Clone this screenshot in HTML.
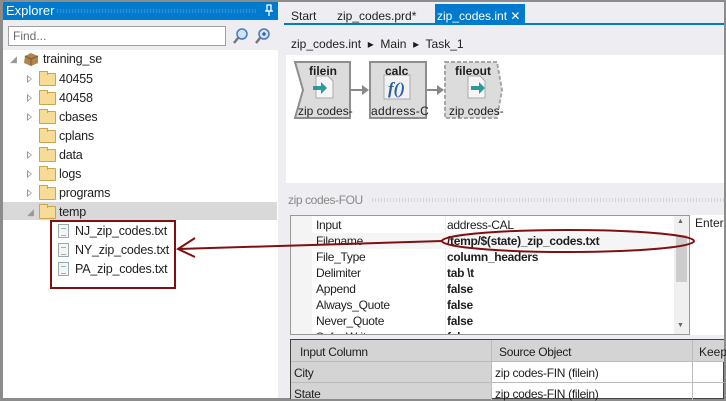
<!DOCTYPE html>
<html><head><style>
*{margin:0;padding:0;box-sizing:border-box}
body{width:726px;height:400px;overflow:hidden;background:#8c8c8c;font-family:"Liberation Sans",sans-serif;font-size:12px;color:#1e1e1e;position:relative}
.a{position:absolute}
.t{position:absolute;white-space:nowrap}
.tr{position:absolute;white-space:nowrap;font-size:12.5px;letter-spacing:-0.2px}
.fold{position:absolute;width:17px;height:13px;background:#f6dc97;border:1px solid #c9a550;border-radius:1px}
.fold:before{content:"";position:absolute;left:-1px;top:-3px;width:7px;height:3px;background:#f6dc97;border:1px solid #c9a550;border-bottom:none}
.tri{position:absolute;width:0;height:0;border-left:5px solid #999;border-top:4px solid transparent;border-bottom:4px solid transparent}
.tri:after{content:"";position:absolute;left:-4px;top:-2px;border-left:3px solid #fff;border-top:2px solid transparent;border-bottom:2px solid transparent}
.doc{position:absolute;width:11px;height:14px;background:#f4f6f6;border:1px solid #9aa}
.doc:before{content:"";position:absolute;left:2px;top:3px;width:5px;height:6px;border-top:1px solid #aab;border-bottom:1px solid #aab}
.row{position:absolute;left:312px;width:362px;height:16px;font-size:12px;letter-spacing:-0.3px}
.row span{position:absolute;top:1px}
</style></head><body>
<div class="a" style="left:3px;top:2px;width:275px;height:396px;background:#fff"></div>
<div class="a" style="left:3px;top:2px;width:275px;height:18px;background:#007acc"></div>
<div class="t" style="left:6px;top:3px;color:#fff;font-size:13px">Explorer</div>
<div class="a" style="left:56px;top:9px;width:200px;height:4px;background-image:radial-gradient(#5aa7e0 0.7px,transparent 0.9px);background-size:3px 2px"></div>
<svg class="a" style="left:264px;top:4px" width="10" height="13"><rect x="3" y="1" width="4" height="6" fill="none" stroke="#fff" stroke-width="1.3"/><path d="M1 7h8M5 7v5" stroke="#fff" stroke-width="1.3"/></svg>
<div class="a" style="left:3px;top:20px;width:275px;height:30px;background:#eeeef2"></div>
<div class="a" style="left:8px;top:26px;width:218px;height:20px;background:#fff;border:1px solid #a0a0a0"></div>
<div class="t" style="left:13px;top:29px;color:#6d6d6d">Find...</div>
<svg class="a" style="left:232px;top:27px" width="40" height="18"><circle cx="10" cy="7" r="5" fill="#cfe3f8" stroke="#4a78b8" stroke-width="1.5"/><line x1="6" y1="11" x2="2" y2="16" stroke="#777" stroke-width="2.5"/><circle cx="32" cy="7" r="5" fill="#cfe3f8" stroke="#4a78b8" stroke-width="1.5"/><line x1="28" y1="11" x2="24" y2="16" stroke="#777" stroke-width="2.5"/><path d="M30 7h4M32 5v4" stroke="#24558e" stroke-width="1.3"/></svg>
<div class="a" style="left:3px;top:202px;width:274px;height:18px;background:#d9d9d9"></div>
<div class="t" style="left:10px;top:54px;color:#999;font-size:9px">◢</div>
<svg class="a" style="left:23px;top:51px" width="17" height="15"><path d="M2 5l6-3 7 3v7l-7 3-7-3z" fill="#b08550"/><path d="M2 5l6 3 7-3M8 8v7" stroke="#7a5a30" fill="none"/></svg>
<div class="tr" style="left:43px;top:52px">training_se</div>
<div class="tri" style="left:27px;top:75px"></div><div class="fold" style="left:39px;top:73px"></div><div class="tr" style="left:59px;top:72px">40455</div>
<div class="tri" style="left:27px;top:94px"></div><div class="fold" style="left:39px;top:92px"></div><div class="tr" style="left:59px;top:91px">40458</div>
<div class="tri" style="left:27px;top:113px"></div><div class="fold" style="left:39px;top:111px"></div><div class="tr" style="left:59px;top:110px">cbases</div>
<div class="fold" style="left:39px;top:130px"></div><div class="tr" style="left:59px;top:129px">cplans</div>
<div class="tri" style="left:27px;top:151px"></div><div class="fold" style="left:39px;top:149px"></div><div class="tr" style="left:59px;top:148px">data</div>
<div class="tri" style="left:27px;top:170px"></div><div class="fold" style="left:39px;top:168px"></div><div class="tr" style="left:59px;top:167px">logs</div>
<div class="tri" style="left:27px;top:189px"></div><div class="fold" style="left:39px;top:187px"></div><div class="tr" style="left:59px;top:186px">programs</div>
<div class="t" style="left:27px;top:207px;color:#999;font-size:9px">◢</div><div class="fold" style="left:39px;top:206px"></div><div class="tr" style="left:59px;top:205px">temp</div>
<div class="doc" style="left:58px;top:224px"></div><div class="tr" style="left:75px;top:224px">NJ_zip_codes.txt</div>
<div class="doc" style="left:58px;top:243px"></div><div class="tr" style="left:75px;top:243px">NY_zip_codes.txt</div>
<div class="doc" style="left:58px;top:262px"></div><div class="tr" style="left:75px;top:262px">PA_zip_codes.txt</div>
<div class="a" style="left:50px;top:220px;width:126px;height:69px;border:2px solid #7f1010"></div>
<div class="a" style="left:278px;top:2px;width:5px;height:396px;background:#eeeef2"></div>
<div class="a" style="left:283px;top:2px;width:441px;height:396px;background:#eeeef2"></div>
<div class="t" style="left:291px;top:9px;font-size:12px">Start</div>
<div class="t" style="left:337px;top:9px;font-size:12px">zip_codes.prd*</div>
<div class="a" style="left:435px;top:4px;width:90px;height:21px;background:#007acc"></div>
<div class="t" style="left:437px;top:9px;font-size:12px;color:#fff">zip_codes.int ✕</div>
<div class="a" style="left:284px;top:23px;width:440px;height:2px;background:#007acc"></div>
<div class="t" style="left:291px;top:37px;font-size:12px">zip_codes.int &nbsp;▸&nbsp; Main &nbsp;▸&nbsp; Task_1</div>
<div class="a" style="left:286px;top:55px;width:438px;height:128px;background:#fff"></div>
<svg class="a" style="left:293px;top:60px" width="220" height="62">
<path d="M2 2h55v56h-55l8-28z" fill="#dcdcdc" stroke="#8e8e8e" stroke-width="2"/>
<rect x="77" y="2" width="56" height="56" fill="#dcdcdc" stroke="#8e8e8e" stroke-width="2"/>
<path d="M152 2h52l5 28-5 28h-52z" fill="#dcdcdc" stroke="#a6a6a6" stroke-width="2" stroke-dasharray="4 2"/>
<path d="M58 30h13" stroke="#888" stroke-width="2"/><path d="M69 25l7 5-7 5z" fill="#888"/>
<path d="M134 30h12" stroke="#888" stroke-width="2"/><path d="M144 25l7 5-7 5z" fill="#888"/>
<path d="M23 16h12l5 5v17h-17z" fill="#f6f6f6" stroke="#aaa"/><path d="M20 26h8v-4l6 6-6 6v-4h-8z" fill="#2a9b96"/>
<rect x="91" y="15" width="26" height="24" fill="#f2f2f2" stroke="#aaa"/>
<path d="M175 16h12l5 5v17h-17z" fill="#f6f6f6" stroke="#aaa"/><path d="M178 26h8v-4l6 6-6 6v-4h-8z" fill="#2a9b96"/>
</svg>
<div class="t" style="left:309px;top:64px;font-weight:bold;font-size:12px">filein</div>
<div class="t" style="left:385px;top:64px;font-weight:bold;font-size:12px">calc</div>
<div class="t" style="left:455px;top:64px;font-weight:bold;font-size:12px">fileout</div>
<div class="t" style="left:388px;top:79px;font-family:'Liberation Serif',serif;font-style:italic;font-weight:bold;font-size:17px;color:#2a5ea8">f()</div>
<div class="t" style="left:298px;top:104px;font-size:12px">zip codes-</div>
<div class="t" style="left:371px;top:104px;font-size:12px;letter-spacing:0.3px">address-C</div>
<div class="t" style="left:449px;top:104px;font-size:12px">zip codes-</div>
<div class="t" style="left:288px;top:193px;font-size:12px;color:#888;letter-spacing:-0.4px">zip codes-FOU</div>
<div class="a" style="left:371px;top:198px;width:353px;height:4px;background-image:radial-gradient(#bbb 0.6px,transparent 0.8px);background-size:3px 2px"></div>
<div class="a" style="left:290px;top:215px;width:400px;height:120px;background:#f4f4f4;border:1px solid #999"></div>
<div class="a" style="left:312px;top:216px;width:362px;height:118px;background:#fff;overflow:hidden"></div>
<div class="a" style="left:445px;top:216px;width:1px;height:118px;background:#eee"></div>
<div class="row" style="top:217px"><span style="left:4px">Input</span><span style="left:135px">address-CAL</span></div>
<div class="row" style="top:233px;background:#f5f5f5"><span style="left:4px">Filename</span><span style="left:135px;font-weight:bold">/temp/$(state)_zip_codes.txt</span></div>
<div class="row" style="top:249px"><span style="left:4px">File_Type</span><span style="left:135px;font-weight:bold">column_headers</span></div>
<div class="row" style="top:265px"><span style="left:4px">Delimiter</span><span style="left:135px;font-weight:bold">tab \t</span></div>
<div class="row" style="top:281px"><span style="left:4px">Append</span><span style="left:135px;font-weight:bold">false</span></div>
<div class="row" style="top:297px"><span style="left:4px">Always_Quote</span><span style="left:135px;font-weight:bold">false</span></div>
<div class="row" style="top:313px"><span style="left:4px">Never_Quote</span><span style="left:135px;font-weight:bold">false</span></div>
<div class="a" style="left:312px;top:329px;width:362px;height:5px;overflow:hidden"><div class="row" style="left:0;top:0"><span style="left:4px">Safe_Write</span><span style="left:135px;font-weight:bold">false</span></div></div>
<div class="a" style="left:674px;top:216px;width:15px;height:118px;background:#f0f0f0"></div>
<div class="a" style="left:676px;top:235px;width:11px;height:47px;background:#cdcdcd"></div>
<div class="t" style="left:677px;top:218px;font-size:7px;color:#666">▲</div>
<div class="t" style="left:677px;top:322px;font-size:7px;color:#666">▼</div>
<div class="a" style="left:690px;top:215px;width:34px;height:120px;background:#fff"></div>
<div class="t" style="left:695px;top:216px;font-size:12px">Enter</div>
<div class="a" style="left:290px;top:339px;width:434px;height:60px;background:#fff;border:1px solid #444"></div>
<div class="a" style="left:291px;top:340px;width:433px;height:22px;background:#d4d4d4;border-bottom:1px solid #bbb"></div>
<div class="a" style="left:291px;top:362px;width:200px;height:37px;background:#d4d4d4"></div>
<div class="a" style="left:291px;top:382px;width:433px;height:1px;background:#bbb"></div>
<div class="a" style="left:491px;top:340px;width:1px;height:60px;background:#bbb"></div>
<div class="a" style="left:692px;top:340px;width:1px;height:60px;background:#bbb"></div>
<div class="t" style="left:300px;top:345px;letter-spacing:-0.3px">Input Column</div>
<div class="t" style="left:499px;top:345px;letter-spacing:-0.3px">Source Object</div>
<div class="t" style="left:699px;top:345px">Keep</div>
<div class="t" style="left:294px;top:366px;letter-spacing:-0.3px">City</div>
<div class="t" style="left:495px;top:366px;letter-spacing:-0.3px">zip codes-FIN (filein)</div>
<div class="t" style="left:294px;top:387px;letter-spacing:-0.3px">State</div>
<div class="t" style="left:495px;top:387px;letter-spacing:-0.3px">zip codes-FIN (filein)</div>
<svg class="a" style="left:0;top:0" width="726" height="400">
<ellipse cx="568" cy="241" rx="126" ry="11" fill="none" stroke="#7f1010" stroke-width="2"/>
<path d="M178 249L442 241" stroke="#7f1010" stroke-width="2"/>
<path d="M195 238L178 249L195 257" stroke="#7f1010" stroke-width="2" fill="none"/>
</svg>
</body></html>
